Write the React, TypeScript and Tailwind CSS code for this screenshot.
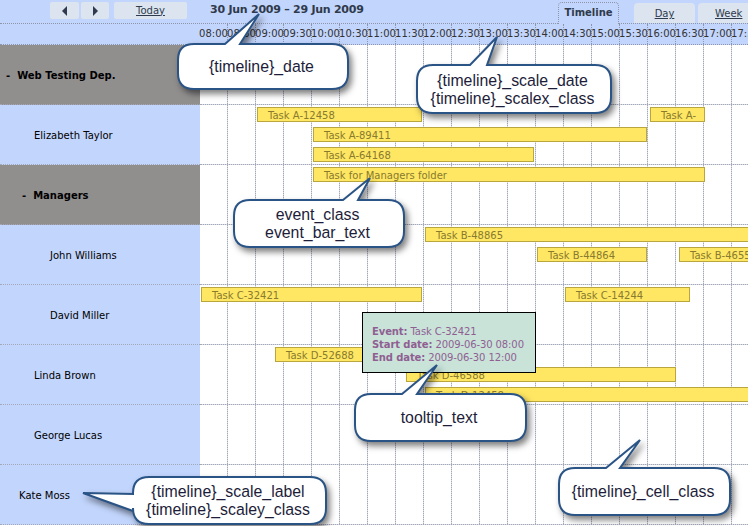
const TIMES = ['08:00','08:30','09:00','09:30','10:00','10:30','11:00','11:30','12:00','12:30','13:00','13:30','14:00','14:30','15:00','15:30','16:00','16:30','17:00','17:30']

type Bar = { text: string; left: number; width: number; top: number }
type Row = { label: string; pad: string; group?: boolean; bars: Bar[] }

const ROWS: Row[] = [
  { label: 'Web Testing Dep.', pad: 'pl-[6px]', group: true, bars: [] },
  { label: 'Elizabeth Taylor', pad: 'pl-[34px]', bars: [
    { text: 'Task A-12458', left: 57, width: 165, top: 2 },
    { text: 'Task A-', left: 450, width: 55, top: 2 },
    { text: 'Task A-89411', left: 113, width: 334, top: 22 },
    { text: 'Task A-64168', left: 113, width: 221, top: 42 },
  ] },
  { label: 'Managers', pad: 'pl-[22px]', group: true, bars: [
    { text: 'Task for Managers folder', left: 113, width: 392, top: 2 },
  ] },
  { label: 'John Williams', pad: 'pl-[50px]', bars: [
    { text: 'Task B-48865', left: 225, width: 340, top: 2 },
    { text: 'Task B-44864', left: 337, width: 110, top: 22 },
    { text: 'Task B-46558', left: 479, width: 110, top: 22 },
  ] },
  { label: 'David Miller', pad: 'pl-[50px]', bars: [
    { text: 'Task C-32421', left: 1, width: 221, top: 2 },
    { text: 'Task C-14244', left: 365, width: 125, top: 2 },
  ] },
  { label: 'Linda Brown', pad: 'pl-[34px]', bars: [
    { text: 'Task D-52688', left: 75, width: 147, top: 2 },
    { text: 'Task D-46588', left: 206, width: 270, top: 22 },
    { text: 'Task D-12458', left: 225, width: 340, top: 42 },
  ] },
  { label: 'George Lucas', pad: 'pl-[34px]', bars: [] },
  { label: 'Kate Moss', pad: 'pl-[19px]', bars: [] },
]

type Callout = { lines: string[]; x: number; y: number; w: number; h: number; tip: [number, number]; base: [number, number]; side?: 'left' }

const CALLOUTS: Callout[] = [
  { lines: ['{timeline}_date'], x: 178, y: 44, w: 170, h: 45, tip: [259, 14], base: [225, 240] },
  { lines: ['{timeline}_scale_date', '{timeline}_scalex_class'], x: 417, y: 65, w: 194, h: 48, tip: [497, 37], base: [470, 487] },
  { lines: ['event_class', 'event_bar_text'], x: 234, y: 200, w: 170, h: 47, tip: [370, 178], base: [343, 358] },
  { lines: ['tooltip_text'], x: 355, y: 394, w: 171, h: 47, tip: [437, 365], base: [402, 417] },
  { lines: ['{timeline}_cell_class'], x: 559, y: 468, w: 171, h: 47, tip: [640, 440], base: [606, 620] },
  { lines: ['{timeline}_scale_label', '{timeline}_scaley_class'], x: 133, y: 477, w: 193, h: 47, tip: [83, 493], base: [494, 511], side: 'left' },
]

function calloutPath(c: Callout) {
  const r = 16
  const R = c.x + c.w
  const B = c.y + c.h
  const top = c.side === 'left' ? '' : `H${c.base[0]} L${c.tip[0]} ${c.tip[1]} L${c.base[1]} ${c.y} `
  const left = c.side === 'left' ? `V${c.base[1]} L${c.tip[0]} ${c.tip[1]} L${c.x} ${c.base[0]} ` : ''
  return `M${c.x + r} ${c.y} ${top}H${R - r} Q${R} ${c.y} ${R} ${c.y + r} V${B - r} Q${R} ${B} ${R - r} ${B} H${c.x + r} Q${c.x} ${B} ${c.x} ${B - r} ${left}V${c.y + r} Q${c.x} ${c.y} ${c.x + r} ${c.y} Z`
}

function GridCells() {
  return (
    <div className="absolute inset-0 flex">
      {TIMES.map((t) => (
        <div key={t} className="w-[28px] shrink-0 border-r border-dotted border-[#a3a8b9] bg-[linear-gradient(#d8dae2,#d8dae2)] bg-[length:1px_100%] bg-right bg-no-repeat bg-origin-border" />
      ))}
    </div>
  )
}

function Arrow({ dir }: { dir: 'left' | 'right' }) {
  return (
    <svg width="7" height="10" viewBox="0 0 7 10" className="fill-[#2f3a4c]">
      <path d={dir === 'left' ? 'M6 0V10L1 5Z' : 'M1 0V10L6 5Z'} />
    </svg>
  )
}

export default function App() {
  return (
    <div className="relative w-[748px] h-[526px] overflow-hidden bg-white font-['DejaVu_Sans',sans-serif] text-[10px]">
      {/* toolbar */}
      <div className="flex h-[24px] border-b border-dotted border-[#8f95a8] bg-[#c2d5fc]">
        <button className="ml-[50px] mt-[2px] flex h-[17px] w-[29px] shrink-0 items-center justify-center rounded-[2px] bg-[#dbe4ef]"><Arrow dir="left" /></button>
        <button className="ml-[2px] mt-[2px] flex h-[17px] w-[28px] shrink-0 items-center justify-center rounded-[2px] bg-[#dbe4ef]"><Arrow dir="right" /></button>
        <button className="ml-[5px] mt-[2px] h-[17px] w-[73px] shrink-0 rounded-[2px] bg-[#dbe4ef] pb-[1px] text-[#2f3a4c] underline">Today</button>
        <div className="ml-[23px] mt-[2px] w-[348px] shrink-0 text-[11px] font-bold tracking-[-0.25px] text-[#2f3a4c]">30 Jun 2009 – 29 Jun 2009</div>
        <div className="mt-[2px] flex h-[22px] w-[61px] shrink-0 items-center justify-center rounded-t-[4px] border border-b-0 border-dotted border-[#8f95a8] bg-[#c2d5fc] pb-[2px] font-bold text-[#2f3a4c]">Timeline</div>
        <div className="ml-[15px] mt-[3px] h-[20px] w-[61px] shrink-0 rounded-t-[4px] bg-[#dbe4ef] pt-[3px] text-center text-[#2f3a4c] underline">Day</div>
        <div className="ml-[3px] mt-[3px] h-[20px] w-[61px] shrink-0 rounded-t-[4px] bg-[#dbe4ef] pl-[17px] pt-[3px] text-[#2f3a4c] underline">Week</div>
      </div>
      {/* time scale */}
      <div className="flex h-[21px] border-b border-dotted border-[#8f95a8] bg-[#c2d5fc]">
        <div className="h-full w-[200px] shrink-0" />
        {TIMES.map((t) => (
          <div key={t} className="flex h-full w-[28px] shrink-0 items-center justify-center whitespace-nowrap border-r border-dotted border-[#8f95a8] pb-[2px] text-[#333]">{t}</div>
        ))}
      </div>
      {/* rows */}
      {ROWS.map((row) => (
        <div key={row.label} className="flex h-[60px]">
          {row.group ? (
            <div className={`flex w-[200px] shrink-0 items-center gap-[7px] border-b border-dotted border-[#a3a8b9] bg-[#918e8e] pt-[2px] font-bold text-black ${row.pad}`}>
              <span>-</span>
              <span>{row.label}</span>
            </div>
          ) : (
            <div className={`flex w-[200px] shrink-0 items-center border-b border-dotted border-[#a3a8b9] bg-[#c2d5fc] pt-[2px] text-black ${row.pad}`}>{row.label}</div>
          )}
          <div className="relative flex-1 border-b border-dotted border-[#a3a8b9] bg-[linear-gradient(#d8dae2,#d8dae2)] bg-[length:100%_1px] bg-bottom bg-no-repeat bg-origin-border">
            <GridCells />
            {row.bars.map((b) => (
              <div
                key={b.text}
                className="absolute h-[15px] overflow-hidden whitespace-nowrap border border-[#b9a63c] bg-[#ffe763] pl-[10px] leading-[15px] text-[#887a2e]"
                style={{ left: b.left, width: b.width, top: b.top }}
              >
                {b.text}
              </div>
            ))}
          </div>
        </div>
      ))}
      {/* tooltip */}
      <div className="absolute left-[362px] top-[312px] h-[61px] w-[174px] border border-black bg-[#c9e3d9] pl-[9px] pt-[12px] leading-[13px] tracking-[-0.1px] text-[#8f5f92]">
        <div><b>Event:</b> Task C-32421</div>
        <div><b>Start date:</b> 2009-06-30 08:00</div>
        <div><b>End date:</b> 2009-06-30 12:00</div>
      </div>
      {/* callouts */}
      {CALLOUTS.map((c) => (
        <div key={c.lines[0]}>
          <svg width="748" height="526" className="absolute left-0 top-0 drop-shadow-[3px_4px_3px_rgba(0,0,0,0.5)]">
            <path d={calloutPath(c)} fill="#fff" stroke="#2a5486" strokeWidth="2" />
          </svg>
          <div
            className="absolute flex flex-col items-center justify-center pr-[3px] pt-[1px] font-['Liberation_Sans',sans-serif] text-[15.85px] leading-[18px] text-[#1d1d3a]"
            style={{ left: c.x, top: c.y, width: c.w, height: c.h }}
          >
            {c.lines.map((l) => <span key={l}>{l}</span>)}
          </div>
        </div>
      ))}
    </div>
  )
}
